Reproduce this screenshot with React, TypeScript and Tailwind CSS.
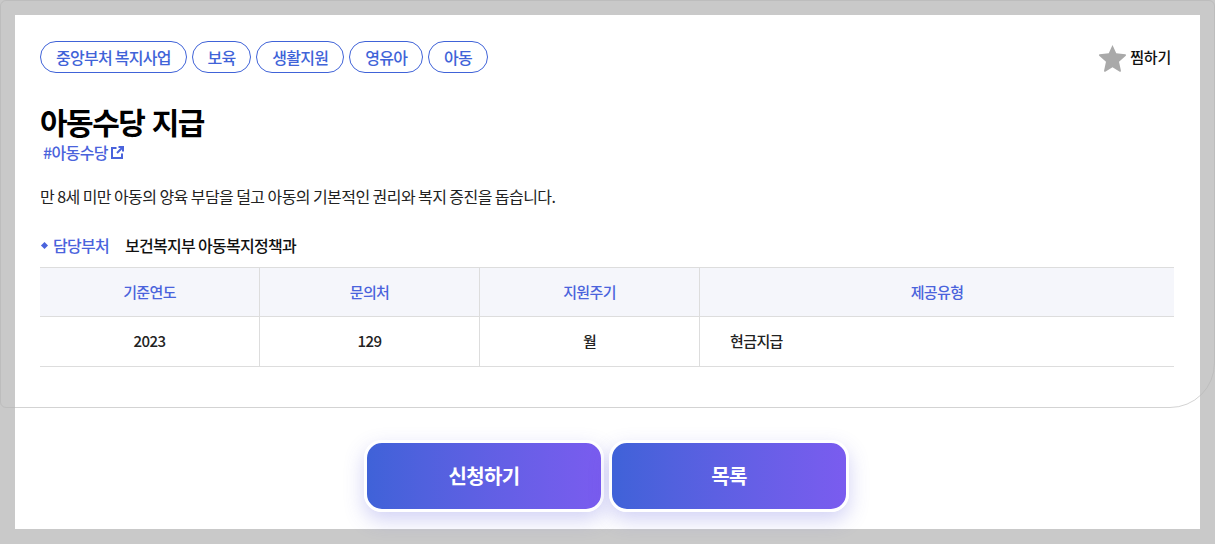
const FONT = "font-['Noto_Sans_CJK_KR','Noto_Sans',sans-serif]";

function Tag({ children }: { children: string }) {
  return (
    <span className="flex h-[32px] items-center rounded-full border border-[#4063d8] px-[14.9px] text-[16px] font-medium tracking-[-0.72px] text-[#4063d8]">
      {children}
    </span>
  );
}

function HeadCell({ children, className = "" }: { children: string; className?: string }) {
  return (
    <div className={`flex items-center justify-center border-r border-[#dddddd] text-[15px] font-medium tracking-[-0.65px] text-[#4a63dc] ${className}`}>
      {children}
    </div>
  );
}

function BodyCell({ children }: { children: string }) {
  return (
    <div className="flex items-center justify-center border-r border-[#dddddd] text-[15px] font-medium tracking-[-0.6px] text-[#222222]">
      {children}
    </div>
  );
}

function ActionButton({ children }: { children: string }) {
  return (
    <button className="flex h-[72px] w-[240px] items-center justify-center rounded-[18px] border-[3px] border-white bg-gradient-to-r from-[#3f62d8] to-[#7a5cef] text-[20px] font-bold tracking-[-0.7px] text-white shadow-[0_8px_20px_rgba(75,75,215,0.25)]">
      {children}
    </button>
  );
}

export default function App() {
  return (
    <div className={`relative h-[544px] w-[1215px] overflow-hidden bg-[#c9c9c9] p-[15px] ${FONT}`}>
      <div className="flex h-[514px] flex-col bg-white">
        <div className="h-[392px] px-[25px] pt-[26px]">
          <div className="flex items-center justify-between pr-[4px]">
            <div className="flex gap-[5px]">
              <Tag>중앙부처 복지사업</Tag>
              <Tag>보육</Tag>
              <Tag>생활지원</Tag>
              <Tag>영유아</Tag>
              <Tag>아동</Tag>
            </div>
            <div className="flex items-center gap-[3px]">
              <svg width="29" height="29" viewBox="0 0 24 24" className="fill-[#a9a9a9]">
                <path d="M12 1.6l3.1 6.9 7.5.8c.6.1.8.8.4 1.2l-5.6 5.1 1.6 7.4c.1.6-.5 1-1 .7L12 20l-6 3.7c-.5.3-1.1-.1-1-.7l1.6-7.4L1 10.5c-.4-.4-.2-1.1.4-1.2l7.500-.8z" />
              </svg>
              <span className="text-[15px] font-medium tracking-[-0.2px] text-[#111111]">찜하기</span>
            </div>
          </div>
          <h1 className="mt-[28px] h-[40px] text-[30px] leading-[40px] font-bold tracking-[-1.5px] [word-spacing:2px] text-black">아동수당 지급</h1>
          <div className="ml-[3px] flex h-[22px] items-center gap-[3px] text-[16px] leading-[22px] font-medium tracking-[-0.64px] text-[#4a63dc]">
            <span>#아동수당</span>
            <svg width="13" height="13" viewBox="0 0 13 13" fill="none" stroke="#4a63dc" strokeWidth="2">
              <path d="M5.500 2H1v10h10V7.500" />
              <path d="M7.500 1H12v4.500M11.700 1.300L6 7" />
            </svg>
          </div>
          <p className="mt-[21px] h-[24px] text-[16px] leading-[24px] tracking-[-0.57px] text-[#222222]">
            만 8세 미만 아동의 양육 부담을 덜고 아동의 기본적인 권리와 복지 증진을 돕습니다.
          </p>
          <div className="mt-[25px] flex h-[24px] items-center text-[16px] leading-[24px] font-medium tracking-[-0.72px]">
            <span className="ml-[2px] h-[5px] w-[5px] rotate-45 bg-[#4a63dc]" />
            <span className="ml-[6px] text-[#4a63dc]">담당부처</span>
            <span className="ml-[16px] text-[#111111]">보건복지부 아동복지정책과</span>
          </div>
          <div className="mt-[10px] w-[1134px] border-t border-b border-[#dddddd]">
            <div className="grid h-[49px] grid-cols-[220px_220px_220px_1fr] border-b border-[#dddddd] bg-[#f5f6fb]">
              <HeadCell>기준연도</HeadCell>
              <HeadCell>문의처</HeadCell>
              <HeadCell>지원주기</HeadCell>
              <HeadCell className="border-r-0">제공유형</HeadCell>
            </div>
            <div className="grid h-[49px] grid-cols-[220px_220px_220px_1fr]">
              <BodyCell>2023</BodyCell>
              <BodyCell>129</BodyCell>
              <BodyCell>월</BodyCell>
              <div className="flex items-center pl-[30px] text-[15px] font-medium tracking-[-0.6px] text-[#222222]">현금지급</div>
            </div>
          </div>
        </div>
        <div className="mt-[33px] flex justify-center gap-[5px] pr-[2px]">
          <ActionButton>신청하기</ActionButton>
          <ActionButton>목록</ActionButton>
        </div>
      </div>
      <div className="pointer-events-none absolute top-0 left-0 h-[408px] w-[1215px] rounded-t-[6px] rounded-b-[6px] rounded-br-[45px] border border-[#b5b5b5]/60" />
    </div>
  );
}
